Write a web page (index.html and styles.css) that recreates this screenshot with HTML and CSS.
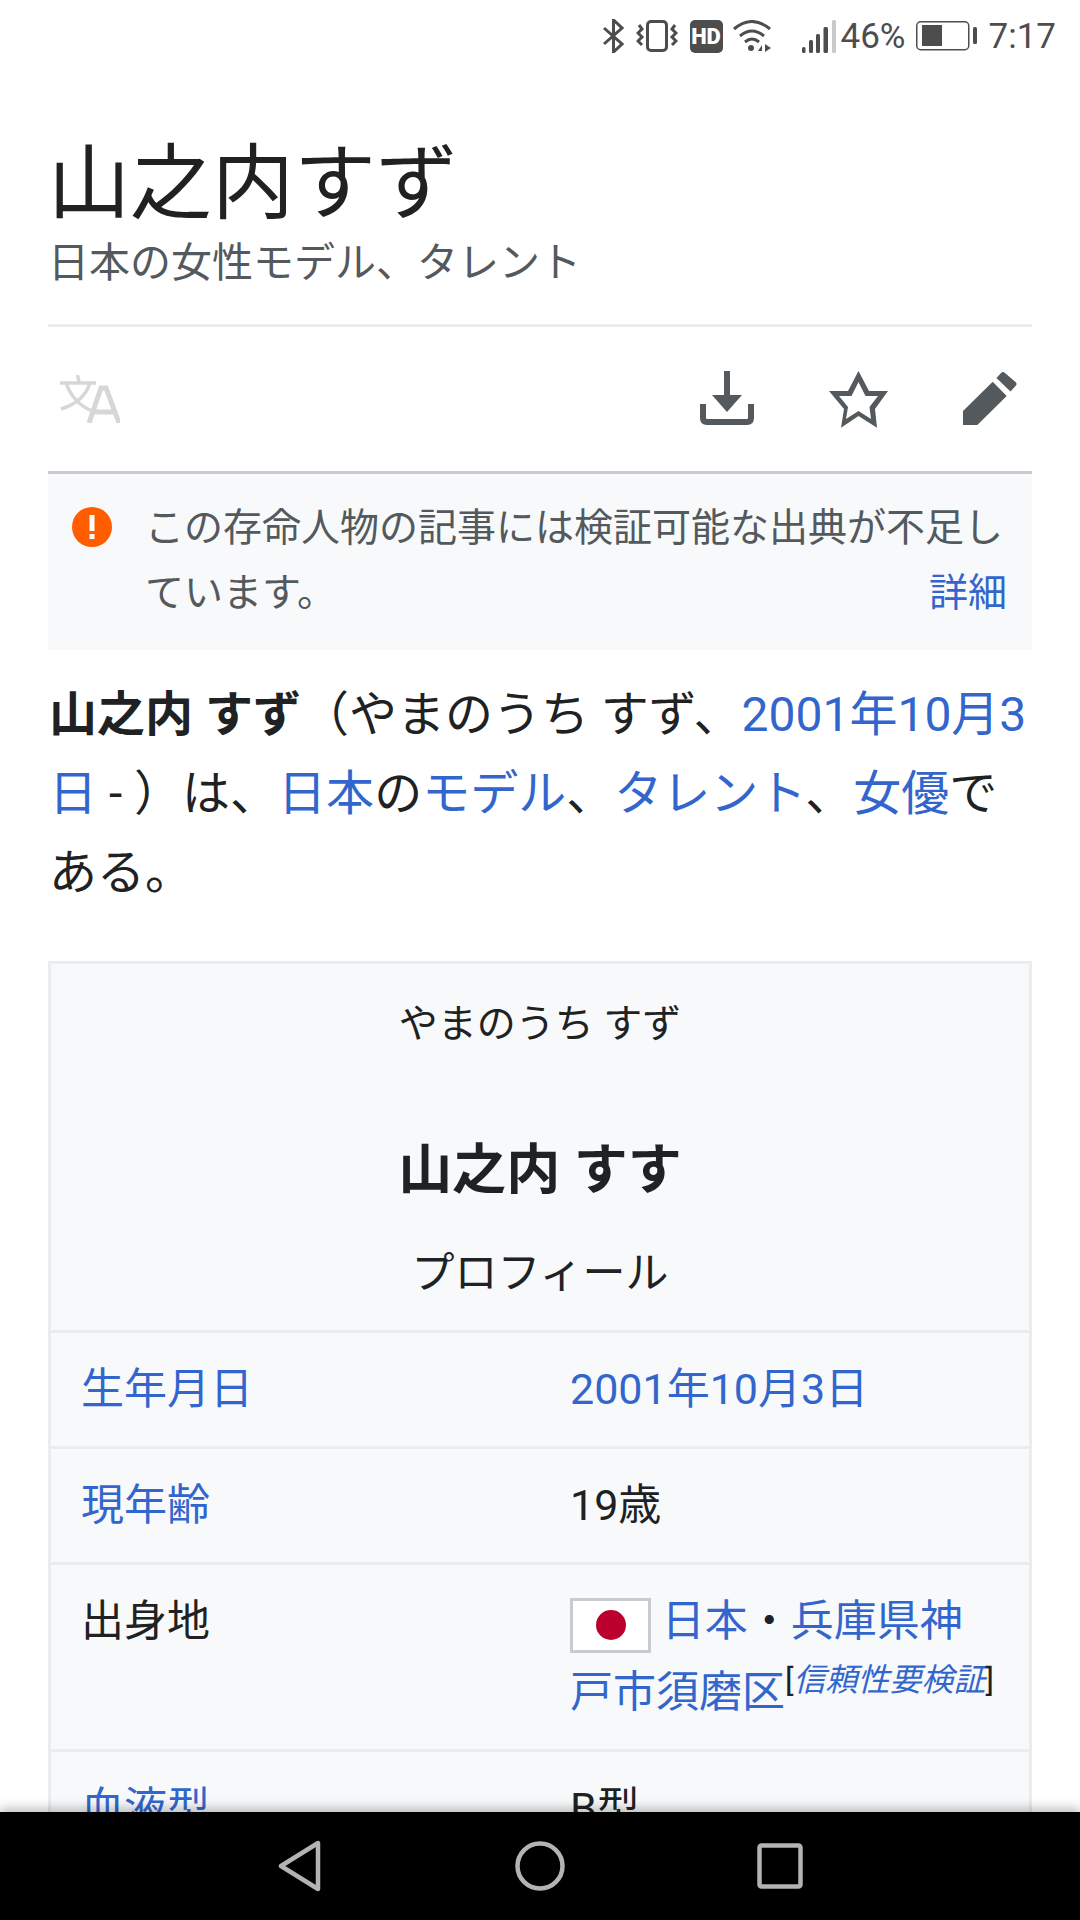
FILE: index.html
```html
<!DOCTYPE html>
<html lang="ja">
<head>
    <meta charset="UTF-8">
    <meta name="viewport" content="width=device-width, initial-scale=1.0">
    <title>山之内すず</title>
    <link rel="stylesheet" href="styles.css">
</head>
<body>
    <div class="status-bar">
        <svg class="st-bt" width="21" height="34" viewBox="0 0 21 34"><path d="M1 9 L19 25 L10.500 33 V1 L19 9 L1 25" fill="none" stroke="#4d4d4d" stroke-width="3"/></svg>
        <svg class="st-vib" width="42" height="32" viewBox="0 0 42 32"><rect x="11.500" y="1.500" width="19" height="29" rx="3.500" fill="none" stroke="#4d4d4d" stroke-width="3"/><path d="M3 5 L6 9 L2 13 L6 17 L2 21 L6 25 M39 5 L36 9 L40 13 L36 17 L40 21 L36 25" fill="none" stroke="#4d4d4d" stroke-width="3"/></svg>
        <span class="st-hd">HD</span>
        <svg class="st-wifi" width="39" height="32" viewBox="0 0 39 32"><path d="M1 9 Q19 -6 37 9 M7 16 Q19 6 31 16 M12 22 Q19 16 26 22" fill="none" stroke="#4d4d4d" stroke-width="3"/><circle cx="18" cy="28" r="3" fill="#4d4d4d"/><path d="M25 31 L29 25 V31 Z M32 24 V32 L38 28 Z" fill="#4d4d4d"/></svg>
        <svg class="st-signal" width="34" height="33" viewBox="0 0 34 33"><g fill="#4d4d4d"><rect x="0" y="27" width="3.500" height="6" rx="1.500"/><rect x="7" y="20" width="4" height="13" rx="1.500"/><rect x="14" y="14" width="4" height="19" rx="1.500"/><rect x="21.500" y="7" width="4.500" height="26" rx="1.500"/></g><rect x="30" y="0" width="4" height="33" rx="1.500" fill="#c9c9c9"/></svg>
        <span class="st-pct">46%</span>
        <svg class="st-batt" width="61" height="30" viewBox="0 0 61 30"><rect x="0.750" y="0.750" width="52" height="28" rx="4" fill="none" stroke="#4d4d4d" stroke-width="1.500"/><rect x="6" y="4" width="20" height="21" fill="#4d4d4d"/><rect x="57" y="6" width="4" height="17" rx="1.500" fill="#4d4d4d"/></svg>
        <span class="st-time">7:17</span>
    </div>

    <header class="page-head">
        <h1>山之内すず</h1>
        <p class="desc">日本の女性モデル、タレント</p>
    </header>

    <div class="actions">
        <svg class="lang-icon" width="60" height="48" viewBox="0 0 60 48"><path d="M0 8 H36 M17.500 0 L19 7 M6 8 Q13 28 32 36 M30 8 Q24 27 1 34" fill="none" stroke="#d5d7d9" stroke-width="3.500"/><path d="M29 48 L41 13 H46 L59 48 M33 37 H55" fill="none" stroke="#d5d7d9" stroke-width="5"/></svg>
        <div class="actions-right">
            <svg width="54" height="54" viewBox="0 0 54 54"><path d="M24 0 H30 V24 H42 L27 41 L12 24 H24 Z" fill="#54595d"/><path d="M3 33 V47 Q3 51 7 51 H47 Q51 51 51 47 V33" fill="none" stroke="#54595d" stroke-width="6"/></svg>
            <svg width="59" height="57" viewBox="0 0 59 57"><path fill-rule="evenodd" d="M29.500 0 L40 20 H59 L46 38 L48 56.700 L29.500 45 L12 56.700 L15 38 L0 20 H19 Z M29.500 11 L22.500 25 H10 L19 36 L17 48 L29.500 40 L42 48 L40.500 36 L49 25 H36.500 Z" fill="#54595d"/></svg>
            <svg width="55" height="54" viewBox="0 0 55 54"><path d="M0 40 L29.700 10.700 L43.700 25 L14.300 54 H0 Z M33.500 7 L38 2 Q40 0 42 2 L52.500 11 Q54.500 13 52.500 15 L47.500 20.500 Z" fill="#54595d"/></svg>
        </div>
    </div>

    <div class="notice">
        <svg class="notice-icon" width="40" height="40" viewBox="0 0 40 40"><circle cx="20" cy="20" r="20" fill="#ff5d00"/><rect x="17.500" y="8" width="5" height="16" fill="#fff"/><rect x="17.500" y="27" width="5" height="5" fill="#fff"/></svg>
        <div class="notice-body">
            <p>この存命人物の記事には検証可能な出典が不足しています。</p>
            <a class="notice-more">詳細</a>
        </div>
    </div>

    <p class="lead"><b>山之内 すず</b>（やまのうち すず、<a>2001年10月3日</a> - ）は、<a>日本</a>の<a>モデル</a>、<a>タレント</a>、<a>女優</a>である。</p>

    <table class="infobox">
        <tr><th colspan="2" class="box-head">
            <div class="box-kana">やまのうち すず</div>
            <div class="box-name">山之内 すす</div>
            <div class="box-profile">プロフィール</div>
        </th></tr>
        <tr><td class="c-label"><a>生年月日</a></td><td><a>2001年10月3日</a></td></tr>
        <tr><td class="c-label"><a>現年齢</a></td><td>19歳</td></tr>
        <tr><td class="c-label">出身地</td><td><span class="flag"><i></i></span> <a>日本</a>・<a>兵庫県神戸市須磨区</a><sup>[<a><em>信頼性要検証</em></a>]</sup></td></tr>
        <tr><td class="c-label"><a>血液型</a></td><td>B型</td></tr>
    </table>

    <nav class="nav-bar">
        <svg width="46" height="52" viewBox="0 0 46 52"><path d="M41 3 V49 L4 26 Z" fill="none" stroke="#b3b3b3" stroke-width="4.500" stroke-linejoin="round"/></svg>
        <svg width="50" height="50" viewBox="0 0 50 50"><circle cx="25" cy="25" r="22.500" fill="none" stroke="#b3b3b3" stroke-width="4.500"/></svg>
        <svg width="46" height="46" viewBox="0 0 46 46"><rect x="2.500" y="2.500" width="41" height="41" rx="2" fill="none" stroke="#b3b3b3" stroke-width="4.500"/></svg>
    </nav>
</body>
</html>
```

FILE: styles.css
```css
* {
    margin: 0;
    padding: 0;
    box-sizing: border-box;
}

html, body {
    height: 1920px;
    overflow: hidden;
}

body {
    background-color: #fff;
    color: #202122;
    font-family: Roboto, "Noto Sans CJK JP", sans-serif;
    padding: 0 48px;
}

a {
    color: #3366cc;
    text-decoration: none;
}

/* status bar */
.status-bar {
    height: 72px;
    margin: 0 -48px;
    padding: 0 24px 0 0;
    display: flex;
    justify-content: flex-end;
    align-items: center;
    color: #4d4d4d;
    font-size: 35px;
}

.st-bt { margin-right: 12px; }
.st-vib { margin-right: 12px; }

.st-hd {
    width: 33px;
    height: 33px;
    margin-right: 10px;
    background-color: #4d4d4d;
    border-radius: 5px;
    color: #fff;
    font-size: 22px;
    font-weight: 900;
    text-align: center;
    line-height: 33px;
}

.st-wifi { margin-right: 30px; }
.st-signal { margin-right: 5px; }
.st-pct { margin-right: 10px; }
.st-batt { margin-right: 12px; }

/* heading */
.page-head {
    height: 255px;
    padding-top: 66px;
    border-bottom: 3px solid #eaecf0;
}

h1 {
    font-size: 82px;
    font-weight: 400;
    line-height: 92px;
}

.desc {
    margin-top: 5px;
    font-size: 41px;
    line-height: 56px;
    color: #54595d;
}

/* action icons */
.actions {
    height: 147px;
    padding: 0 14px 0 12px;
    display: flex;
    justify-content: space-between;
    align-items: center;
    border-bottom: 3px solid #c8ccd1;
}

.actions-right {
    display: flex;
    gap: 75px;
}

/* ambox */
.notice {
    height: 176px;
    padding: 33px 25px 0 24px;
    display: flex;
    gap: 33px;
    background-color: #f8f9fa;
}

.notice-icon { flex: none; }

.notice-body {
    flex: 1;
    align-self: flex-start;
    margin-top: -11px;
    font-size: 39px;
    line-height: 65px;
    color: #54595d;
    position: relative;
}

.notice-more {
    position: absolute;
    right: 0;
    bottom: 0;
}

/* intro */
.lead {
    margin-top: 25px;
    padding: 0 0 0 1px;
    font-size: 48px;
    line-height: 79px;
}

/* infobox */
.infobox {
    width: 100%;
    margin-top: 49px;
    border-collapse: collapse;
    background-color: #f8f9fa;
    border: 3px solid #eaecf0;
    table-layout: fixed;
}

.infobox td, .infobox th {
    border-top: 3px solid #eaecf0;
    vertical-align: top;
    font-size: 43px;
    font-weight: 400;
    line-height: 71px;
    padding: 21px 30px;
}

.infobox .c-label {
    width: 488px;
}

.infobox .box-head {
    height: 369px;
    padding: 30px 0 0;
    text-align: center;
}

.box-kana {
    font-size: 39px;
    line-height: 60px;
}

.box-name {
    margin-top: 82px;
    font-size: 54px;
    font-weight: 700;
    line-height: 70px;
}

.box-profile {
    margin-top: 37px;
    font-size: 43px;
    line-height: 60px;
}

.flag {
    display: inline-flex;
    justify-content: center;
    align-items: center;
    width: 81px;
    height: 55px;
    vertical-align: -4px;
    background-color: #fff;
    border: 3px solid #c8ccd1;
}

.flag i {
    width: 30px;
    height: 30px;
    border-radius: 50%;
    background-color: #bc002d;
}

sup {
    font-size: 32px;
    line-height: 0;
    vertical-align: 16px;
}

/* phone nav bar */
.nav-bar {
    position: absolute;
    left: 0;
    right: 0;
    top: 1812px;
    height: 108px;
    background-color: #000;
    box-shadow: 0 -4px 10px rgba(0, 0, 0, 0.25);
    display: flex;
    justify-content: center;
    align-items: center;
    gap: 192px;
}
```
